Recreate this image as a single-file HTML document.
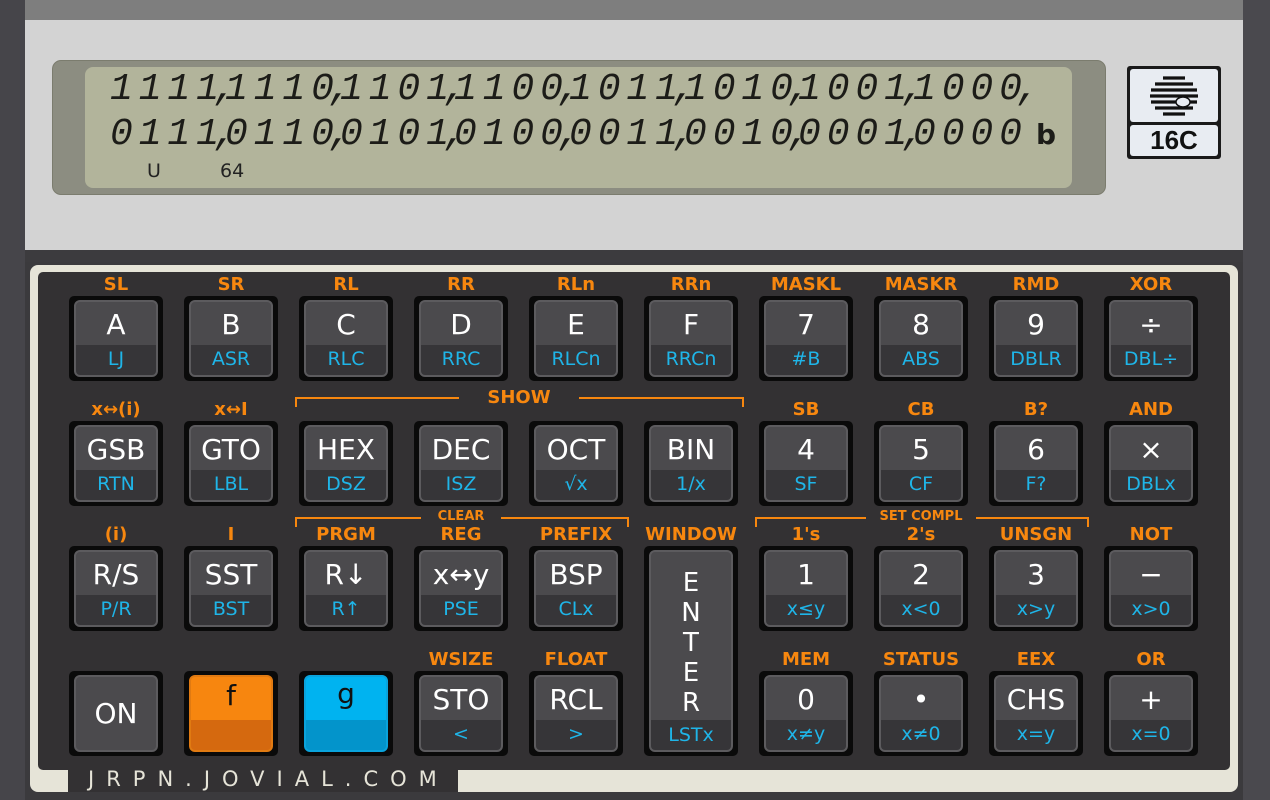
<!DOCTYPE html>
<html><head><meta charset="utf-8"><style>
*{margin:0;padding:0;box-sizing:border-box}
body{width:1270px;height:800px;background:#3b3a3d;position:relative;overflow:hidden;font-family:"DejaVu Sans","Liberation Sans",sans-serif}
.a{position:absolute}
.k{position:absolute;width:94px;height:85px;background:#0a0a0a;border-radius:5px}
.k .in{position:absolute;left:5px;top:4px;right:5px;bottom:4px;border-radius:6px;border:2px solid #5c5b5e;background:linear-gradient(#4b4a4d 0,#4b4a4d 43px,#363538 43px);overflow:hidden}
.k .m{position:absolute;left:0;right:0;top:6px;text-align:center;color:#fff;font-size:28px;line-height:34px}
.k .b{position:absolute;left:0;right:0;top:46px;text-align:center;color:#1fb5e8;font-size:19px;line-height:22px}
.o{position:absolute;width:120px;text-align:center;color:#f7870f;font-weight:bold;font-size:18px;line-height:20px}
.g{position:absolute;font-family:"Liberation Mono",monospace;font-style:italic;font-size:38px;line-height:38px;letter-spacing:5.9px;color:#1c1c18;white-space:nowrap}
.g span{margin-left:-11px}
.br{position:absolute;height:10px;border:2px solid #f7870f;border-bottom:none}
</style></head><body>
<div class="a" style="left:0;top:0;width:1270px;height:20px;background:#7e7e7e"></div>
<div class="a" style="left:0;top:0;width:25px;height:800px;background:#46454a"></div>
<div class="a" style="left:1243px;top:0;width:27px;height:800px;background:#4a494e"></div>
<div class="a" style="left:25px;top:20px;width:1218px;height:230px;background:#d3d3d3"></div>
<div class="a" style="left:52px;top:60px;width:1054px;height:135px;background:#8c8d81;border-radius:9px;border:1px solid #7b7c6e"></div>
<div class="a" style="left:85px;top:67px;width:987px;height:121px;background:#b2b49b;border-radius:8px"></div>

<div class="g" style="left:110px;top:71px">1111<span>,</span></div>
<div class="g" style="left:225px;top:71px">1110<span>,</span></div>
<div class="g" style="left:340px;top:71px">1101<span>,</span></div>
<div class="g" style="left:454px;top:71px">1100<span>,</span></div>
<div class="g" style="left:569px;top:71px">1011<span>,</span></div>
<div class="g" style="left:684px;top:71px">1010<span>,</span></div>
<div class="g" style="left:798px;top:71px">1001<span>,</span></div>
<div class="g" style="left:913px;top:71px">1000<span>,</span></div>
<div class="g" style="left:110px;top:116px">0111<span>,</span></div>
<div class="g" style="left:225px;top:116px">0110<span>,</span></div>
<div class="g" style="left:340px;top:116px">0101<span>,</span></div>
<div class="g" style="left:454px;top:116px">0100<span>,</span></div>
<div class="g" style="left:569px;top:116px">0011<span>,</span></div>
<div class="g" style="left:684px;top:116px">0010<span>,</span></div>
<div class="g" style="left:798px;top:116px">0001<span>,</span></div>
<div class="g" style="left:913px;top:116px">0000</div>

<div class="a" style="left:147px;top:160px;font-size:19px;color:#222">U</div>
<div class="a" style="left:220px;top:160px;font-size:19px;color:#222">64</div>
<div class="a" style="left:1036px;top:118px;font-size:28px;color:#1c1c18;font-weight:bold">b</div>
<div class="a" style="left:1127px;top:66px;width:94px;height:93px;background:#1a1a1a;border-radius:3px"></div>
<div class="a" style="left:1130px;top:69px;width:88px;height:53px;background:#e8ecf2;border-radius:3px"></div>
<svg class="a" style="left:1130px;top:69px" width="88" height="53" viewBox="0 0 88 53">
<g stroke="#111" stroke-width="3.2"><line x1="33" y1="9" x2="55" y2="9"/><line x1="25" y1="15" x2="63" y2="15"/><line x1="21" y1="21" x2="67" y2="21"/><line x1="20" y1="27" x2="68" y2="27"/><line x1="21" y1="33" x2="67" y2="33"/><line x1="25" y1="39" x2="63" y2="39"/><line x1="33" y1="45" x2="55" y2="45"/></g>
<ellipse cx="53" cy="33" rx="7" ry="5" fill="#e8ecf2" stroke="#111" stroke-width="1.5"/></svg>
<div class="a" style="left:1130px;top:125px;width:88px;height:31px;background:#e8ecf2;border-radius:3px;text-align:center;font-size:26px;line-height:31px;color:#111;font-family:'Liberation Sans',sans-serif;font-weight:bold">16C</div>
<div class="a" style="left:25px;top:250px;width:1218px;height:12px;background:#3c3b3e"></div>
<div class="a" style="left:30px;top:265px;width:1208px;height:527px;background:#e6e4d8;border-radius:8px"></div>
<div class="a" style="left:38px;top:272px;width:1192px;height:498px;background:#333133;border-radius:5px"></div>
<div class="a" style="left:68px;top:765px;width:390px;height:27px;background:#333133"></div>
<div class="a" style="left:88px;top:767px;font-size:21px;letter-spacing:12px;color:#e6e4d8">JRPN.JOVIAL.COM</div>

<div class="br" style="left:295px;top:397px;width:449px"></div>
<div class="o" style="left:459px;top:388px;background:#333133;width:120px">SHOW</div>
<div class="br" style="left:295px;top:517px;width:334px"></div>
<div class="o" style="left:421px;top:510px;background:#333133;width:80px;font-size:13px;line-height:14px">CLEAR</div>
<div class="br" style="left:755px;top:517px;width:334px"></div>
<div class="o" style="left:866px;top:510px;background:#333133;width:110px;font-size:13px;line-height:14px">SET COMPL</div>

<div id="keys">
<div class="o" style="left:56px;top:275px">SL</div><div class="k" style="left:69px;top:296px"><div class="in"><div class="m">A</div><div class="b">LJ</div></div></div>
<div class="o" style="left:171px;top:275px">SR</div><div class="k" style="left:184px;top:296px"><div class="in"><div class="m">B</div><div class="b">ASR</div></div></div>
<div class="o" style="left:286px;top:275px">RL</div><div class="k" style="left:299px;top:296px"><div class="in"><div class="m">C</div><div class="b">RLC</div></div></div>
<div class="o" style="left:401px;top:275px">RR</div><div class="k" style="left:414px;top:296px"><div class="in"><div class="m">D</div><div class="b">RRC</div></div></div>
<div class="o" style="left:516px;top:275px">RLn</div><div class="k" style="left:529px;top:296px"><div class="in"><div class="m">E</div><div class="b">RLCn</div></div></div>
<div class="o" style="left:631px;top:275px">RRn</div><div class="k" style="left:644px;top:296px"><div class="in"><div class="m">F</div><div class="b">RRCn</div></div></div>
<div class="o" style="left:746px;top:275px">MASKL</div><div class="k" style="left:759px;top:296px"><div class="in"><div class="m">7</div><div class="b">#B</div></div></div>
<div class="o" style="left:861px;top:275px">MASKR</div><div class="k" style="left:874px;top:296px"><div class="in"><div class="m">8</div><div class="b">ABS</div></div></div>
<div class="o" style="left:976px;top:275px">RMD</div><div class="k" style="left:989px;top:296px"><div class="in"><div class="m">9</div><div class="b">DBLR</div></div></div>
<div class="o" style="left:1091px;top:275px">XOR</div><div class="k" style="left:1104px;top:296px"><div class="in"><div class="m">÷</div><div class="b">DBL÷</div></div></div>
<div class="o" style="left:56px;top:400px">x↔(i)</div><div class="k" style="left:69px;top:421px"><div class="in"><div class="m">GSB</div><div class="b">RTN</div></div></div>
<div class="o" style="left:171px;top:400px">x↔I</div><div class="k" style="left:184px;top:421px"><div class="in"><div class="m">GTO</div><div class="b">LBL</div></div></div>
<div class="k" style="left:299px;top:421px"><div class="in"><div class="m">HEX</div><div class="b">DSZ</div></div></div>
<div class="k" style="left:414px;top:421px"><div class="in"><div class="m">DEC</div><div class="b">ISZ</div></div></div>
<div class="k" style="left:529px;top:421px"><div class="in"><div class="m">OCT</div><div class="b">√x</div></div></div>
<div class="k" style="left:644px;top:421px"><div class="in"><div class="m">BIN</div><div class="b">1/x</div></div></div>
<div class="o" style="left:746px;top:400px">SB</div><div class="k" style="left:759px;top:421px"><div class="in"><div class="m">4</div><div class="b">SF</div></div></div>
<div class="o" style="left:861px;top:400px">CB</div><div class="k" style="left:874px;top:421px"><div class="in"><div class="m">5</div><div class="b">CF</div></div></div>
<div class="o" style="left:976px;top:400px">B?</div><div class="k" style="left:989px;top:421px"><div class="in"><div class="m">6</div><div class="b">F?</div></div></div>
<div class="o" style="left:1091px;top:400px">AND</div><div class="k" style="left:1104px;top:421px"><div class="in"><div class="m">×</div><div class="b">DBLx</div></div></div>
<div class="o" style="left:56px;top:525px">(i)</div><div class="k" style="left:69px;top:546px"><div class="in"><div class="m">R/S</div><div class="b">P/R</div></div></div>
<div class="o" style="left:171px;top:525px">I</div><div class="k" style="left:184px;top:546px"><div class="in"><div class="m">SST</div><div class="b">BST</div></div></div>
<div class="o" style="left:286px;top:525px">PRGM</div><div class="k" style="left:299px;top:546px"><div class="in"><div class="m">R↓</div><div class="b">R↑</div></div></div>
<div class="o" style="left:401px;top:525px">REG</div><div class="k" style="left:414px;top:546px"><div class="in"><div class="m">x↔y</div><div class="b">PSE</div></div></div>
<div class="o" style="left:516px;top:525px">PREFIX</div><div class="k" style="left:529px;top:546px"><div class="in"><div class="m">BSP</div><div class="b">CLx</div></div></div>
<div class="o" style="left:631px;top:525px">WINDOW</div>
<div class="k" style="left:644px;top:546px;height:210px"><div class="in" style="background:linear-gradient(#4b4a4d 0,#4b4a4d 168px,#363538 168px)"><div class="m" style="top:16px;font-size:26px;line-height:30px">E<br>N<br>T<br>E<br>R</div><div class="b" style="top:172px">LSTx</div></div></div>
<div class="o" style="left:746px;top:525px">1's</div><div class="k" style="left:759px;top:546px"><div class="in"><div class="m">1</div><div class="b">x≤y</div></div></div>
<div class="o" style="left:861px;top:525px">2's</div><div class="k" style="left:874px;top:546px"><div class="in"><div class="m">2</div><div class="b">x&lt;0</div></div></div>
<div class="o" style="left:976px;top:525px">UNSGN</div><div class="k" style="left:989px;top:546px"><div class="in"><div class="m">3</div><div class="b">x&gt;y</div></div></div>
<div class="o" style="left:1091px;top:525px">NOT</div><div class="k" style="left:1104px;top:546px"><div class="in"><div class="m">−</div><div class="b">x&gt;0</div></div></div>
<div class="k" style="left:69px;top:671px"><div class="in" style="background:#4b4a4d"><div class="m" style="top:20px">ON</div></div></div>
<div class="k" style="left:184px;top:671px"><div class="in" style="background:linear-gradient(#f7860f 0,#f7860f 43px,#d5690f 43px);border-color:#e07a12"><div class="m" style="color:#111;top:2px">f</div></div></div>
<div class="k" style="left:299px;top:671px"><div class="in" style="background:linear-gradient(#00b3f0 0,#00b3f0 43px,#0394cb 43px);border-color:#0aa3dc"><div class="m" style="color:#111;top:0">g</div></div></div>
<div class="o" style="left:401px;top:650px">WSIZE</div><div class="k" style="left:414px;top:671px"><div class="in"><div class="m">STO</div><div class="b">&lt;</div></div></div>
<div class="o" style="left:516px;top:650px">FLOAT</div><div class="k" style="left:529px;top:671px"><div class="in"><div class="m">RCL</div><div class="b">&gt;</div></div></div>
<div class="o" style="left:746px;top:650px">MEM</div><div class="k" style="left:759px;top:671px"><div class="in"><div class="m">0</div><div class="b">x≠y</div></div></div>
<div class="o" style="left:861px;top:650px">STATUS</div><div class="k" style="left:874px;top:671px"><div class="in"><div class="m">•</div><div class="b">x≠0</div></div></div>
<div class="o" style="left:976px;top:650px">EEX</div><div class="k" style="left:989px;top:671px"><div class="in"><div class="m">CHS</div><div class="b">x=y</div></div></div>
<div class="o" style="left:1091px;top:650px">OR</div><div class="k" style="left:1104px;top:671px"><div class="in"><div class="m">+</div><div class="b">x=0</div></div></div>
</div>
</body></html>
